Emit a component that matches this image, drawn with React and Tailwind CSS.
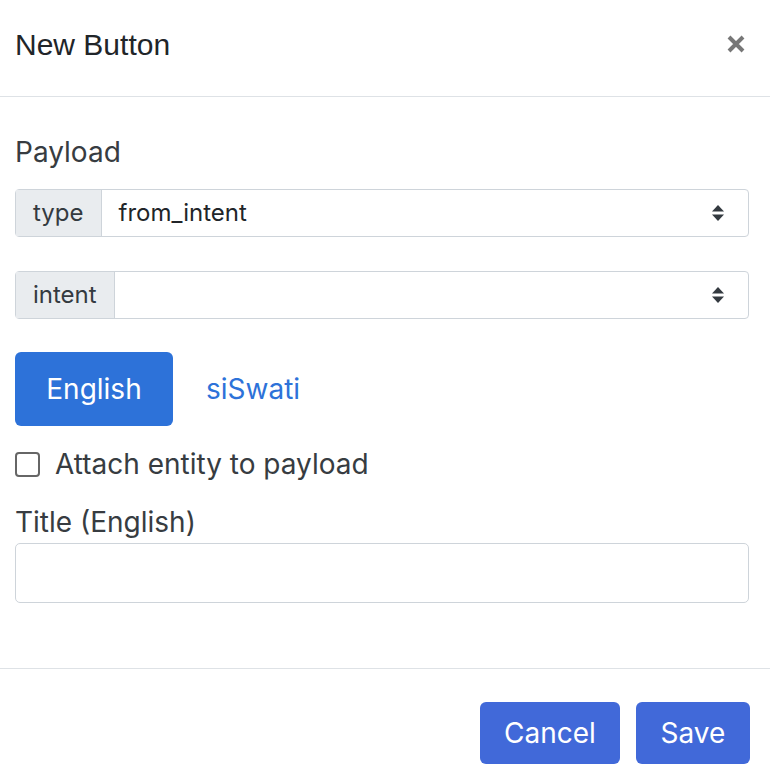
import React, { useState } from "react";

const SelectArrows = () => (
  <svg width="14" height="20" viewBox="0 0 14 20" className="shrink-0">
    <path d="M7 2 L13 8.5 H1 Z" fill="#343a40" />
    <path d="M7 18 L13 11.5 H1 Z" fill="#343a40" />
  </svg>
);

const InputGroup = ({ label, value }) => (
  <div className="flex h-[48px] w-full rounded-[4px] border border-[#ced4da] text-[24px] text-[#212529]">
    <div className="flex items-center border-r border-[#ced4da] bg-[#e9ecef] px-[17px] text-[#343a40]">
      {label}
    </div>
    <div className="flex flex-1 items-center justify-between pl-[17px] pr-[23px]">
      <span>{value}</span>
      <SelectArrows />
    </div>
  </div>
);

export default function App() {
  const [attach, setAttach] = useState(false);

  return (
    <div
      className="flex h-[784px] w-[770px] flex-col bg-white text-[#373c41]"
      style={{ fontFamily: "Inter, 'Noto Sans', sans-serif" }}
    >
      {/* header */}
      <div className="flex h-[97px] shrink-0 items-center justify-between border-b border-[#dee2e6] pl-[15px] pr-[24px] pb-[8px]">
        <h5
          className="text-[30px] text-[#212529]"
          style={{ fontFamily: "'Liberation Sans', Arial, sans-serif" }}
        >
          New Button
        </h5>
        <svg width="20" height="20" viewBox="0 0 20 20">
          <path d="M3 3 L17 17 M17 3 L3 17" stroke="#777" strokeWidth="4" />
        </svg>
      </div>

      {/* body */}
      <div className="flex flex-1 flex-col pl-[15px] pr-[21px] pt-[39px]">
        <p className="text-[28px] leading-[32px]">Payload</p>
        <div className="mt-[21px]">
          <InputGroup label="type" value="from_intent" />
        </div>
        <div className="mt-[34px]">
          <InputGroup label="intent" value="" />
        </div>

        <div className="mt-[33px] flex items-center gap-[33px]">
          <button className="h-[74px] w-[158px] rounded-[6px] bg-[#2d72d9] text-[28px] text-white">
            English
          </button>
          <span className="text-[28px] text-[#2d72d9]">siSwati</span>
        </div>

        <label className="mt-[22px] flex items-center gap-[15px] text-[28px] leading-[32px]">
          <input
            type="checkbox"
            checked={attach}
            onChange={() => setAttach(!attach)}
            className="h-[25px] w-[25px] appearance-none rounded-[4px] border-2 border-[#666] bg-white"
          />
          <span>Attach entity to payload</span>
        </label>

        <p className="mt-[26px] text-[28px] leading-[32px]">Title (English)</p>
        <input
          type="text"
          className="mt-[5px] h-[60px] w-full rounded-[5px] border border-[#ced4da] px-[12px] text-[24px] outline-none"
        />
      </div>

      {/* footer */}
      <div className="flex h-[116px] shrink-0 items-start justify-end gap-[16px] border-t border-[#dee2e6] pr-[20px] pt-[33px]">
        <button className="h-[62px] w-[140px] rounded-[6px] bg-[#4169d9] text-[28px] text-white">
          Cancel
        </button>
        <button className="h-[62px] w-[114px] rounded-[6px] bg-[#4169d9] text-[28px] text-white">
          Save
        </button>
      </div>
    </div>
  );
}
